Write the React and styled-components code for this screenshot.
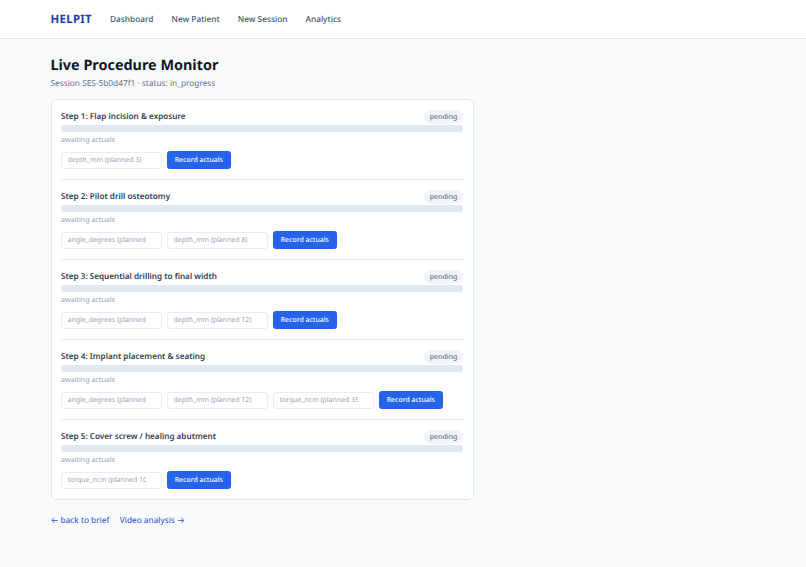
import React from "react";
import styled, { createGlobalStyle } from "styled-components";

const FONT = `"Noto Sans", "Liberation Sans", sans-serif`;
const Global = createGlobalStyle`
  html, body { margin: 0; padding: 0; background: #f8fafc; }
  body { font-family: ${FONT}; color: #0f172a; text-rendering: geometricPrecision; }
  * { box-sizing: border-box; }
  input, button { text-rendering: geometricPrecision; }
`;
const Page = styled.div`min-height: 567px; background: #f8fafc;`;
const Header = styled.header`
  height: 39px; background: #fff; border-bottom: 1px solid #e2e8f0;
  display: flex; align-items: center; padding: 0 50.6px; gap: 18px;
`;
const Brand = styled.a`font-size: 11.4px; font-weight: 700; color: #1e40af; letter-spacing: 0.3px;`;
const NavLink = styled.a`font-size: 8.3px; font-weight: 500; color: #475569;`;
const Main = styled.main`width: 423px; margin-left: 50.5px; padding-top: 16px;`;
const Title = styled.h1`margin: 0; font-size: 14.4px; line-height: 21px; font-weight: 700; color: #0f172a;`;
const Sub = styled.p`margin: 2px 0 0; font-size: 8.3px; line-height: 12px; color: #64748b;`;
const Card = styled.section`
  margin-top: 9px; background: #fff; border: 1px solid #e2e8f0; border-radius: 6px;
  padding: 0 9.6px;
`;
const Step = styled.div`
  padding: 9px 0 10px;
  & + & { border-top: 1px solid #e2e8f0; }
`;
const StepHead = styled.div`display: flex; justify-content: space-between; align-items: center; height: 15px;`;
const StepTitle = styled.span`font-size: 8.15px; font-weight: 600; color: #334155;`;
const Badge = styled.span`
  font-size: 7px; font-weight: 500; color: #64748b; background: #f1f5f9;
  border-radius: 999px; padding: 0 5.5px; line-height: 15px; height: 14px;
`;
const Bar = styled.div`height: 7px; margin-top: 1px; background: #e2e8f0; border-radius: 3px;`;
const Note = styled.div`margin-top: 3px; font-size: 7.1px; line-height: 10px; color: #94a3b8;`;
const Fields = styled.div`margin-top: 6px; display: flex; gap: 5px; align-items: center;`;
const Field = styled.input`
  width: 101px; height: 17px; padding: 1px 15px 0 5.5px; font: 6.95px ${FONT};
  border: 1px solid #e8edf3; border-radius: 3px; background: #fff; outline: none;
  &::placeholder { color: #94a3b8; opacity: 1; }
`;
const Button = styled.button`
  width: 63.5px; height: 18px; padding: 1px 0 0; border: 1px solid #2563eb; border-radius: 2.5px;
  background: #2563eb; color: #fff; font: 500 6.9px ${FONT};
`;
const Footer = styled.div`margin-top: 15px; display: flex; gap: 10.5px; font-size: 8.3px; line-height: 12px;`;
const FootLink = styled.a`color: #1d4ed8;`;
const Arrow = styled.span`font-family: Inter, sans-serif;`;

const steps = [
  ["Step 1: Flap incision & exposure", ["depth_mm (planned 3)"]],
  ["Step 2: Pilot drill osteotomy", ["angle_degrees (planned 15)", "depth_mm (planned 8)"]],
  ["Step 3: Sequential drilling to final width", ["angle_degrees (planned 15)", "depth_mm (planned 12)"]],
  ["Step 4: Implant placement & seating", ["angle_degrees (planned 15)", "depth_mm (planned 12)", "torque_ncm (planned 35)"]],
  ["Step 5: Cover screw / healing abutment", ["torque_ncm (planned 10)"]],
];

export default function App() {
  return (
    <Page>
      <Global />
      <Header>
        <Brand>HELPIT</Brand>
        <NavLink>Dashboard</NavLink>
        <NavLink>New Patient</NavLink>
        <NavLink>New Session</NavLink>
        <NavLink>Analytics</NavLink>
      </Header>
      <Main>
        <Title>Live Procedure Monitor</Title>
        <Sub>Session SES-5b0d47f1 · status: in_progress</Sub>
        <Card>
          {steps.map(([name, fields]) => (
            <Step key={name}>
              <StepHead>
                <StepTitle>{name}</StepTitle>
                <Badge>pending</Badge>
              </StepHead>
              <Bar />
              <Note>awaiting actuals</Note>
              <Fields>
                {fields.map((f) => <Field key={f} placeholder={f} />)}
                <Button>Record actuals</Button>
              </Fields>
            </Step>
          ))}
        </Card>
        <Footer>
          <FootLink><Arrow>←</Arrow> back to brief</FootLink>
          <FootLink>Video analysis <Arrow>→</Arrow></FootLink>
        </Footer>
      </Main>
    </Page>
  );
}
